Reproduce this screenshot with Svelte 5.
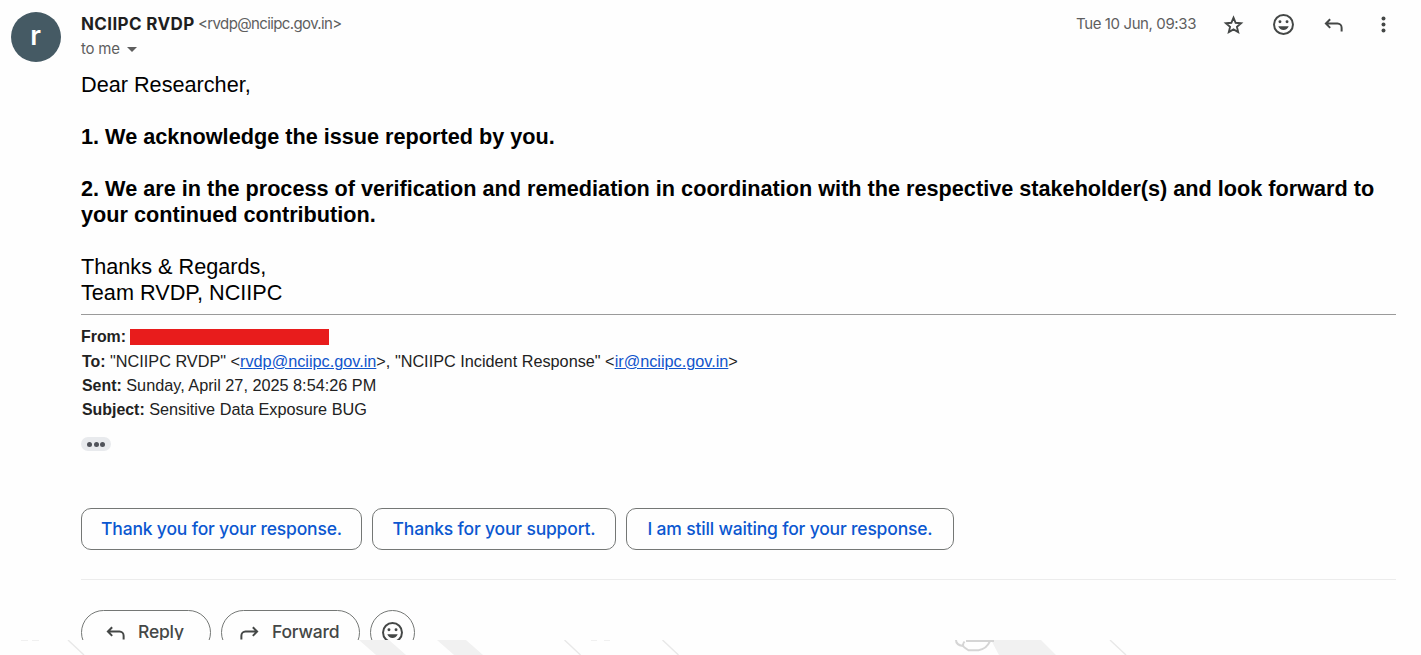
<script>
  const suggestions = [
    { text: 'Thank you for your response.', width: 281 },
    { text: 'Thanks for your support.', width: 244 },
    { text: 'I am still waiting for your response.', width: 328 }
  ];
</script>

{#snippet smile()}
  <svg class="icon smile" viewBox="0 0 24 24" aria-hidden="true">
    <circle cx="12" cy="12" r="9.1" fill="none" stroke="currentColor" stroke-width="1.9" />
    <circle cx="8.6" cy="9.4" r="1.4" />
    <circle cx="15.4" cy="9.4" r="1.4" />
    <path d="M7 13.6h10c-.8 2.2-2.7 3.6-5 3.6s-4.200-1.400-5-3.600z" />
  </svg>
{/snippet}

{#snippet arrow(flip)}
  <svg class="icon" class:flip viewBox="0 0 24 24" aria-hidden="true">
    <path d="M8.800 7 4.700 11.100l4.100 4.100M5 11.100H15.800a4 4 0 0 1 4 4V18.600" fill="none" stroke="currentColor" stroke-width="1.900" />
  </svg>
{/snippet}

<main class="page">
  <article class="mail">
    <div class="avatar"><span>r</span></div>
    <div class="content">
      <header>
        <div class="sender">
          <div class="line"><strong>NCIIPC RVDP</strong><span class="address">&lt;rvdp@nciipc.gov.in&gt;</span></div>
          <div class="to"><span>to me</span><i class="caret"></i></div>
        </div>
        <div class="tools">
          <time>Tue 10 Jun, 09:33</time>
          <svg class="icon star" viewBox="0 0 24 24" aria-hidden="true">
            <path d="M12 5.500l2.050 4.850 5.250.45-4 3.450 1.200 5.100L12 16.650 7.500 19.350l1.200-5.100-4-3.450 5.250-.45z" fill="none" stroke="currentColor" stroke-width="1.800" />
          </svg>
          {@render smile()}
          {@render arrow(false)}
          <svg class="icon" viewBox="0 0 24 24" aria-hidden="true">
            <circle cx="12" cy="6.200" r="1.900" /><circle cx="12" cy="12" r="1.900" /><circle cx="12" cy="17.800" r="1.900" />
          </svg>
        </div>
      </header>

      <section class="body">
        <p>Dear Researcher,</p>
        <p class="bold">1. We acknowledge the issue reported by you.</p>
        <p class="bold">2. We are in the process of verification and remediation in coordination with the respective stakeholder(s) and look forward to<br />your continued contribution.</p>
        <p>Thanks &amp; Regards,<br />Team RVDP, NCIIPC</p>
      </section>

      <section class="quoted">
        <div class="from"><b>From:</b><span class="redacted"></span></div>
        <div><b>To:</b> "NCIIPC RVDP" &lt;<span class="link">rvdp@nciipc.gov.in</span>&gt;, "NCIIPC Incident Response" &lt;<span class="link">ir@nciipc.gov.in</span>&gt;</div>
        <div><b>Sent:</b> Sunday, April 27, 2025 8:54:26 PM</div>
        <div><b>Subject:</b> Sensitive Data Exposure BUG</div>
      </section>

      <div class="trimmed"><i></i><i></i><i></i></div>

      <div class="suggestions">
        {#each suggestions as s}
          <button style:width="{s.width}px">{s.text}</button>
        {/each}
      </div>

      <footer>
        <button class="reply">{@render arrow(false)}<span>Reply</span></button>
        <button class="forward">{@render arrow(true)}<span>Forward</span></button>
        <button class="react">{@render smile()}</button>
      </footer>
    </div>
  </article>

  <svg class="pattern" viewBox="0 0 1421 15" aria-hidden="true">
    <path d="M359 0h30l17 15h-30zM437 0h29l17 15h-29zM991 0h50l15 15h-57z" fill="#f1f1f1" />
    <path d="M68 0l16 15M564.500 0l16 15M662.500 0l16 15M1110 0l16 15" stroke="#e8e8e8" stroke-width="1.400" />
    <path d="M21 .5h7M32 .5h7M591 .5h6M604 .5h6" stroke="#f0f0f0" />
    <path d="M956 0q0 5 7 6M964.500 1.500q-3 4 0 6t4 2.700h10q8-1 11.500-9M966 1h28" fill="none" stroke="#d5d5d5" stroke-width="2" />
  </svg>
</main>

<style>
  :global(body) { margin: 0; background: #fefefe; }
  .page { width: 1421px; height: 655px; overflow: hidden; background: #fefefe; font-family: Inter, sans-serif; color: #1f1f1f; }
  .mail { display: flex; height: 640px; overflow: hidden; box-sizing: border-box; padding: 12px 25px 0 11px; }
  .avatar { flex: none; width: 50px; height: 50px; margin-right: 20px; border-radius: 50%; background: #455a64; color: #fff; display: flex; align-items: center; justify-content: center; font: 600 27px/46px Inter, sans-serif; }
  .avatar span { padding: 0 1px 3px 0; }
  .content { width: 1315px; flex: none; }
  header { display: flex; justify-content: space-between; height: 60px; }
  .line { display: flex; align-items: center; height: 24px; white-space: nowrap; }
  .line strong { width: 117px; font-size: 17px; font-weight: 700; letter-spacing: .37px; }
  .address, .to, time { font-size: 15px; color: #5e5e5e; }
  .address { letter-spacing: -.62px; padding-bottom: 1px; }
  .to { display: flex; align-items: center; height: 25px; gap: 8px; letter-spacing: -.2px; }
  .caret { border: 5px solid transparent; border-top-color: #5e5e5e; border-bottom: 0; margin: 2px 0 0 -1px; }
  .tools { display: flex; height: 25px; align-items: center; color: #444746; }
  time { width: 120px; margin-right: 25px; letter-spacing: -.39px; white-space: nowrap; padding-bottom: 2px; }
  .tools .icon { margin-right: 25px; }
  .tools .icon:last-child { margin-right: 0; }
  .icon { width: 25px; height: 25px; flex: none; fill: currentColor; }
  .flip { transform: scaleX(-1); }
  .body { font: 21.67px/26px "Liberation Sans", Arial, sans-serif; color: #000; border-bottom: 1px solid #9a9a9a; padding-bottom: 8px; white-space: nowrap; }
  .body p { margin: 0 0 26px; }
  .body p:last-child { margin: 0; }
  .bold { font-weight: 700; }
  .quoted { padding: 10px 0 0 1px; font: 16.25px/24px "Liberation Sans", Arial, sans-serif; color: #222; white-space: nowrap; }
  .quoted div { height: 24px; }
  .quoted b { font-size: 15.9px; }
  .quoted .from { display: flex; align-items: center; margin-left: -1px; }
  .from b { width: 45px; }
  .redacted { width: 199px; height: 16px; margin-left: 4px; background: #e81c1c; }
  .link { color: #1155cc; text-decoration: underline; }
  .trimmed { width: 30px; height: 14px; margin-top: 16px; border-radius: 7px; background: #e8eaed; display: flex; align-items: center; justify-content: center; gap: 1.5px; }
  .trimmed i { width: 5px; height: 5px; border-radius: 50%; background: #50535a; }
  .suggestions { display: flex; gap: 10px; padding: 57px 0 29px; border-bottom: 1px solid #ececec; }
  button { box-sizing: border-box; padding: 0; background: transparent; border: 1px solid #747775; white-space: nowrap; font-family: Inter, sans-serif; }
  .suggestions button { height: 42px; border-radius: 10px; padding-bottom: 2px; color: #0b57d0; font-size: 17.500px; font-weight: 500; letter-spacing: -.18px; }
  footer { display: flex; gap: 10px; padding-top: 30px; }
  footer button { height: 45px; border-radius: 23px; display: flex; align-items: center; color: #444746; font-size: 17.500px; font-weight: 500; }
  .reply { width: 130px; padding-left: 21px; }
  .forward { width: 139px; padding-left: 15px; }
  footer span { margin-left: 10px; padding-bottom: 2px; letter-spacing: -.2px; }
  .react { width: 45px; justify-content: center; padding-bottom: 1px; }
  .pattern { display: block; width: 1421px; height: 15px; }
</style>
